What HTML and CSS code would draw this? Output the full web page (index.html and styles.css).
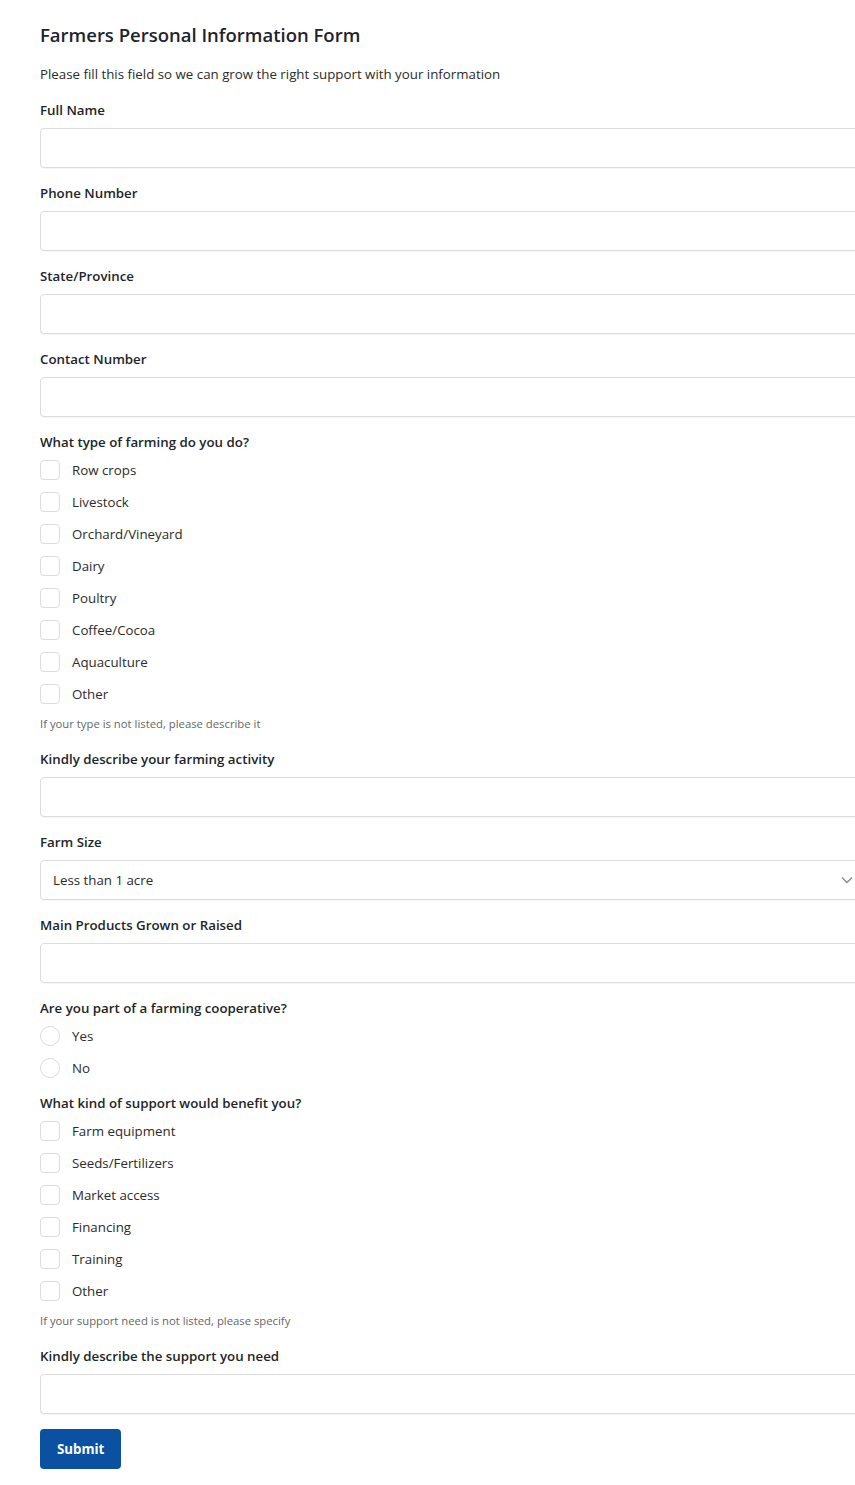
FILE: index.html
```html
<!DOCTYPE html>
<html lang="en">
<head>
    <meta charset="UTF-8">
    <meta name="viewport" content="width=device-width, initial-scale=1.0">
    <title>Farmers Personal Information Form</title>
    <link rel="stylesheet" href="styles.css">
</head>
<body>
    <form class="farm-form" action="" method="post">
        <h1 class="form-title">Farmers Personal Information Form</h1>
        <p class="form-desc">Please fill this field so we can grow the right support with your information</p>

        <div class="field">
            <label for="full-name">Full Name</label>
            <input type="text" id="full-name" name="full-name">
        </div>
        <div class="field">
            <label for="phone">Phone Number</label>
            <input type="text" id="phone" name="phone">
        </div>
        <div class="field">
            <label for="state">State/Province</label>
            <input type="text" id="state" name="state">
        </div>
        <div class="field">
            <label for="contact">Contact Number</label>
            <input type="text" id="contact" name="contact">
        </div>

        <div class="field">
            <span class="label">What type of farming do you do?</span>
            <div class="options">
                <label class="option"><input type="checkbox" name="type"><span>Row crops</span></label>
                <label class="option"><input type="checkbox" name="type"><span>Livestock</span></label>
                <label class="option"><input type="checkbox" name="type"><span>Orchard/Vineyard</span></label>
                <label class="option"><input type="checkbox" name="type"><span>Dairy</span></label>
                <label class="option"><input type="checkbox" name="type"><span>Poultry</span></label>
                <label class="option"><input type="checkbox" name="type"><span>Coffee/Cocoa</span></label>
                <label class="option"><input type="checkbox" name="type"><span>Aquaculture</span></label>
                <label class="option"><input type="checkbox" name="type"><span>Other</span></label>
            </div>
            <div class="hint">If your type is not listed, please describe it</div>
        </div>

        <div class="field">
            <label for="activity">Kindly describe your farming activity</label>
            <input type="text" id="activity" name="activity">
        </div>
        <div class="field">
            <label for="farm-size">Farm Size</label>
            <div class="select-wrap">
                <select id="farm-size" name="farm-size">
                    <option>Less than 1 acre</option>
                    <option>1 - 5 acres</option>
                    <option>5 - 20 acres</option>
                    <option>More than 20 acres</option>
                </select>
                <svg class="chevron" width="12" height="8" viewBox="0 0 12 8"><path d="M1 1.5l5 5 5-5" fill="none" stroke="#8a8a8a" stroke-width="1.4"/></svg>
            </div>
        </div>
        <div class="field">
            <label for="products">Main Products Grown or Raised</label>
            <input type="text" id="products" name="products">
        </div>

        <div class="field">
            <span class="label">Are you part of a farming cooperative?</span>
            <div class="options">
                <label class="option"><input type="radio" name="coop"><span>Yes</span></label>
                <label class="option"><input type="radio" name="coop"><span>No</span></label>
            </div>
        </div>

        <div class="field">
            <span class="label">What kind of support would benefit you?</span>
            <div class="options">
                <label class="option"><input type="checkbox" name="support"><span>Farm equipment</span></label>
                <label class="option"><input type="checkbox" name="support"><span>Seeds/Fertilizers</span></label>
                <label class="option"><input type="checkbox" name="support"><span>Market access</span></label>
                <label class="option"><input type="checkbox" name="support"><span>Financing</span></label>
                <label class="option"><input type="checkbox" name="support"><span>Training</span></label>
                <label class="option"><input type="checkbox" name="support"><span>Other</span></label>
            </div>
            <div class="hint">If your support need is not listed, please specify</div>
        </div>

        <div class="field">
            <label for="support-need">Kindly describe the support you need</label>
            <input type="text" id="support-need" name="support-need">
        </div>

        <button type="submit" class="submit-btn">Submit</button>
    </form>
</body>
</html>
```

FILE: styles.css
```css
body {
    margin: 0;
    padding: 21px 0 0 40px;
    font-family: "Open Sans", Arial, sans-serif;
    color: #212529;
    background: #fff;
    overflow-x: hidden;
}
.farm-form {
    width: 823px;
}
.form-title {
    margin: 0;
    font-size: 18.5px;
    line-height: 28px;
    font-weight: 600;
    color: #1c2430;
}
.form-desc {
    margin: 15px 0 16px;
    font-size: 13.3px;
    line-height: 20px;
    color: #2b2b2b;
}
.field {
    margin-bottom: 15px;
}
.field > label,
.field > .label {
    display: block;
    margin-bottom: 8px;
    font-size: 13.3px;
    line-height: 20px;
    font-weight: 600;
    color: #212529;
}
input[type="text"],
select {
    display: block;
    width: 100%;
    height: 40px;
    margin: 0;
    padding: 0 12px;
    border: 1px solid #dcdcdc;
    border-radius: 4px;
    box-sizing: border-box;
    background: #fff;
    font-family: inherit;
    font-size: 13.3px;
    color: #2b2b2b;
    box-shadow: 0 1px 1px rgba(0, 0, 0, 0.04);
}
.select-wrap {
    position: relative;
}
select {
    appearance: none;
    -webkit-appearance: none;
}
.chevron {
    position: absolute;
    right: 10px;
    top: 16px;
    pointer-events: none;
}
.options {
    display: flex;
    flex-direction: column;
    gap: 12px;
}
.option {
    display: flex;
    align-items: center;
    gap: 12px;
    height: 20px;
    font-size: 13.3px;
    color: #2b2b2b;
}
.option input {
    appearance: none;
    -webkit-appearance: none;
    width: 20px;
    height: 20px;
    margin: 0;
    border: 1px solid #dcdcdc;
    border-radius: 4px;
    background: #fff;
    box-sizing: border-box;
    flex-shrink: 0;
}
.option input[type="radio"] {
    border-radius: 50%;
}
.hint {
    margin-top: 12px;
    padding-bottom: 2px;
    font-size: 11.3px;
    line-height: 16px;
    color: #666;
}
.submit-btn {
    display: block;
    height: 40px;
    padding: 0 17px;
    border: 0;
    border-radius: 4px;
    background: #0a52a1;
    color: #fff;
    font-family: inherit;
    font-size: 13.3px;
    font-weight: 700;
    cursor: pointer;
}
```
